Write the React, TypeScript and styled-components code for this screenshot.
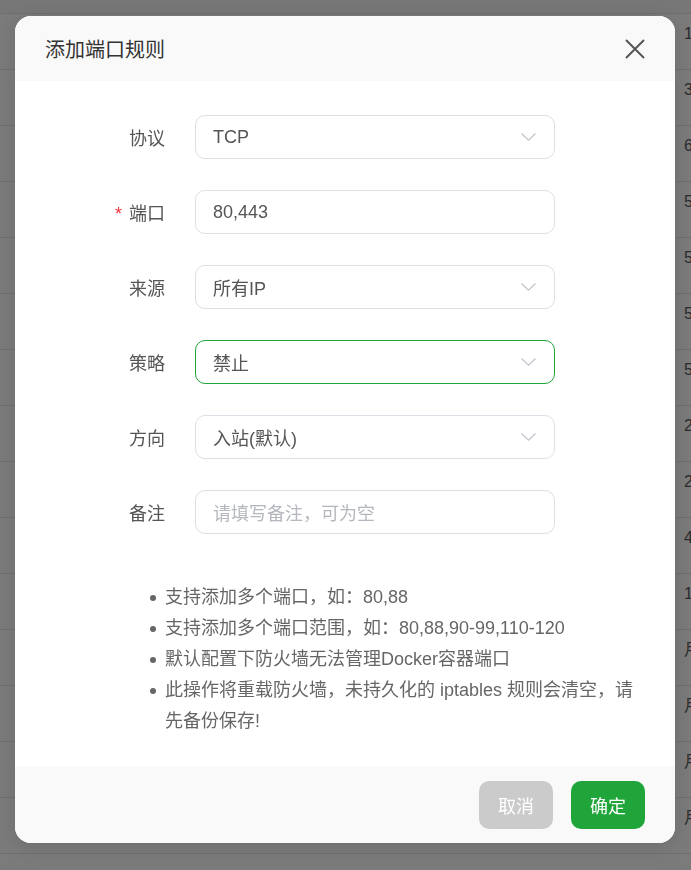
import React from 'react';
import styled, { createGlobalStyle } from 'styled-components';

const GlobalStyle = createGlobalStyle`
  html, body {
    margin: 0;
    padding: 0;
    width: 100%;
    height: 100%;
    overflow: hidden;
    background: #7b7b7b;
    font-family: "Liberation Sans", "Noto Sans CJK SC", sans-serif;
  }
`;

const Backdrop = styled.div`
  height: 870px;
  background: #7b7b7b;
  border-top: 13px solid #777777;
`;

const BgRow = styled.div`
  display: grid;
  grid-template-columns: 684px auto;
  height: 56px;
  box-sizing: border-box;
  padding-top: 10px;
  border-top: 1px solid #6f6f6f;
  font-size: 16px;
  line-height: 20px;
  color: #2c2c2c;
  white-space: nowrap;
`;

const Overlay = styled.div`
  position: fixed;
  inset: 0;
  display: flex;
  align-items: flex-start;
  padding: 16px 0 0 15px;
`;

const Modal = styled.div`
  width: 660px;
  height: 827px;
  border-radius: 16px;
  overflow: hidden;
  background: #ffffff;
  display: flex;
  flex-direction: column;
  box-shadow: 0 4px 20px rgba(0, 0, 0, 0.12);
`;

const Header = styled.div`
  height: 65px;
  flex: none;
  display: flex;
  align-items: center;
  justify-content: space-between;
  padding: 0 28px 0 30px;
  background: #f9f9f9;
`;

const Title = styled.div`
  font-size: 20px;
  color: #333333;
  font-family: "Noto Sans CJK SC", sans-serif;
`;

const CloseButton = styled.button`
  width: 24px;
  height: 24px;
  padding: 0;
  border: none;
  background: none;
  display: flex;
  align-items: center;
  justify-content: center;
  cursor: pointer;
`;

const Body = styled.div`
  flex: 1;
  padding: 34px 0 0 0;
`;

const Form = styled.div`
  display: flex;
  flex-direction: column;
  gap: 31px;
`;

const FormRow = styled.div`
  display: grid;
  grid-template-columns: 150px 360px;
  column-gap: 30px;
  align-items: center;
`;

const Label = styled.label`
  text-align: right;
  font-size: 18px;
  color: #555555;
  font-family: "Noto Sans CJK SC", sans-serif;
`;

const Required = styled.span`
  color: #f0323c;
  margin-right: 7px;
  font-family: "Liberation Sans", sans-serif;
`;

const Field = styled.div<{ $active?: boolean }>`
  height: 44px;
  box-sizing: border-box;
  border: 1px solid ${p => (p.$active ? '#20a53a' : '#dcdfe6')};
  border-radius: 10px;
  display: flex;
  align-items: center;
  justify-content: space-between;
  padding: 0 18px 0 17px;
  background: #ffffff;
`;

const Value = styled.span<{ $placeholder?: boolean }>`
  font-size: 18px;
  color: ${p => (p.$placeholder ? '#b4b7bd' : '#555555')};
`;

const Notes = styled.ul`
  margin: 48px 30px 0 0;
  padding: 0 0 0 150px;
  list-style: none;
`;

const Note = styled.li`
  position: relative;
  font-size: 18px;
  line-height: 31px;
  color: #666666;
  &::before {
    content: '';
    position: absolute;
    left: -15px;
    top: 13px;
    width: 6px;
    height: 6px;
    border-radius: 50%;
    background: #666666;
  }
`;

const Footer = styled.div`
  height: 77px;
  flex: none;
  display: flex;
  align-items: center;
  justify-content: flex-end;
  gap: 18px;
  padding: 0 30px;
  background: #f9f9f9;
`;

const Button = styled.button<{ $primary?: boolean }>`
  width: 74px;
  height: 48px;
  border: none;
  border-radius: 10px;
  background: ${p => (p.$primary ? '#20a53a' : '#cbcbcb')};
  color: #ffffff;
  font-size: 18px;
  font-family: "Noto Sans CJK SC", sans-serif;
  cursor: pointer;
`;

const Chevron = () => (
  <svg width="15" height="8" viewBox="0 0 15 8" fill="none">
    <path d="M0.5 0.5 L7.5 7.2 L14.5 0.5" stroke="#c0c4cc" strokeWidth="1.2" />
  </svg>
);

const CloseIcon = () => (
  <svg width="20" height="20" viewBox="0 0 20 20" fill="none">
    <path d="M1 1 L19 19 M19 1 L1 19" stroke="#555555" strokeWidth="2" />
  </svg>
);

const bgCells = ['1', '3', '6', '5', '5', '5', '5', '2', '2', '4', '1', '月', '月', '月', '月', ''];

const fields = [
  { label: '协议', value: 'TCP', select: true },
  { label: '端口', value: '80,443', required: true },
  { label: '来源', value: '所有IP', select: true },
  { label: '策略', value: '禁止', select: true, active: true },
  { label: '方向', value: '入站(默认)', select: true },
  { label: '备注', value: '请填写备注，可为空', placeholder: true },
];

const notes = [
  '支持添加多个端口，如：80,88',
  '支持添加多个端口范围，如：80,88,90-99,110-120',
  '默认配置下防火墙无法管理Docker容器端口',
  '此操作将重载防火墙，未持久化的 iptables 规则会清空，请先备份保存!',
];

function App(): JSX.Element {
  return (
    <>
      <GlobalStyle />
      <Backdrop>
        {bgCells.map((c, i) => (
          <BgRow key={i}>
            <span />
            <span>{c}</span>
          </BgRow>
        ))}
      </Backdrop>
      <Overlay>
        <Modal>
          <Header>
            <Title>添加端口规则</Title>
            <CloseButton aria-label="close">
              <CloseIcon />
            </CloseButton>
          </Header>
          <Body>
            <Form>
              {fields.map(f => (
                <FormRow key={f.label}>
                  <Label>
                    {f.required && <Required>*</Required>}
                    {f.label}
                  </Label>
                  <Field $active={f.active}>
                    <Value $placeholder={f.placeholder}>{f.value}</Value>
                    {f.select && <Chevron />}
                  </Field>
                </FormRow>
              ))}
            </Form>
            <Notes>
              {notes.map(n => (
                <Note key={n}>{n}</Note>
              ))}
            </Notes>
          </Body>
          <Footer>
            <Button>取消</Button>
            <Button $primary>确定</Button>
          </Footer>
        </Modal>
      </Overlay>
    </>
  );
}

export default App;
